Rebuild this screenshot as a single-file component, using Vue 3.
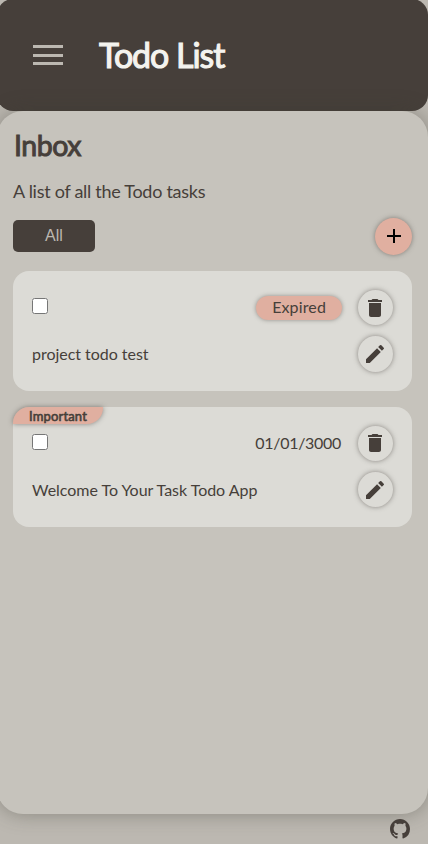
<script setup>
const tasks = [
  { id: 1, title: 'project todo test', date: 'Expired', expired: true, important: false },
  { id: 2, title: 'Welcome To Your Task Todo App', date: '01/01/3000', expired: false, important: true },
]
</script>

<template>
  <div class="page">
    <header class="header">
      <button class="menu" aria-label="Menu"><span></span><span></span><span></span></button>
      <h1>Todo List</h1>
    </header>
    <main class="main">
      <h2>Inbox</h2>
      <p class="desc">A list of all the Todo tasks</p>
      <div class="bar">
        <button class="all">All</button>
        <button class="round add" aria-label="Add">
          <svg width="24" height="24" viewBox="0 0 24 24"><path d="M19 13h-6v6h-2v-6H5v-2h6V5h2v6h6v2z" /></svg>
        </button>
      </div>
      <article v-for="t in tasks" :key="t.id" class="task" :class="{ flagged: t.important }">
        <span v-if="t.important" class="tag">Important</span>
        <div class="row">
          <input type="checkbox" class="check" />
          <span class="date" :class="{ expired: t.expired }">{{ t.date }}</span>
          <button class="round delete" aria-label="Delete">
            <svg width="24" height="24" viewBox="0 0 24 24"><path d="M6 19c0 1.1.9 2 2 2h8c1.1 0 2-.9 2-2V7H6v12zM19 4h-3.5l-1-1h-5l-1 1H5v2h14V4z" /></svg>
          </button>
        </div>
        <div class="row second">
          <span class="title">{{ t.title }}</span>
          <button class="round edit" aria-label="Edit">
            <svg width="24" height="24" viewBox="0 0 24 24"><path d="M3 17.25V21h3.75L17.81 9.94l-3.75-3.75L3 17.25zM20.71 7.04a1 1 0 0 0 0-1.41l-2.34-2.34a1 1 0 0 0-1.41 0l-1.83 1.83 3.75 3.75 1.83-1.83z" /></svg>
          </button>
        </div>
      </article>
    </main>
    <footer class="footer">
      <svg width="20" height="20" viewBox="0 0 16 16"><path d="M8 0C3.58 0 0 3.58 0 8c0 3.54 2.29 6.53 5.47 7.59.4.07.55-.17.55-.38 0-.19-.01-.82-.01-1.49-2.01.37-2.53-.49-2.69-.94-.09-.23-.48-.94-.82-1.13-.28-.15-.68-.52-.01-.53.63-.01 1.08.58 1.23.82.72 1.21 1.87.87 2.33.66.07-.52.28-.87.51-1.07-1.78-.2-3.64-.89-3.64-3.95 0-.87.31-1.59.82-2.15-.08-.2-.36-1.02.08-2.12 0 0 .67-.21 2.2.82.64-.18 1.32-.27 2-.27s1.36.09 2 .27c1.53-1.04 2.2-.82 2.2-.82.44 1.1.16 1.92.08 2.12.51.56.82 1.27.82 2.15 0 3.07-1.87 3.75-3.65 3.95.29.25.54.73.54 1.48 0 1.07-.01 1.93-.01 2.2 0 .21.15.46.55.38A8.01 8.01 0 0 0 16 8c0-4.42-3.58-8-8-8z" /></svg>
    </footer>
  </div>
</template>

<style>
body { background: #bcb8b1; overflow: hidden; }
</style>

<style scoped>
* { box-sizing: border-box; }
.page {
  display: flex;
  flex-direction: column;
  height: 844px;
  margin-left: -3px;
  font-family: Lato, sans-serif;
  color: #463f3a;
}
h1, h2, p { margin: 0; }
button { border: 0; padding: 0; }
.header {
  display: flex;
  align-items: center;
  height: 112px;
  margin-top: -1px;
  padding-left: 36px;
  border-radius: 16px;
  background: #463f3a;
}
.menu {
  display: flex;
  flex-direction: column;
  gap: 6px;
  width: 30px;
  background: none;
}
.menu span { height: 3px; background: #bcb8b1; }
.menu span:nth-child(2) { margin-bottom: -1px; }
h1 {
  margin-left: 36px;
  padding-bottom: 1px;
  font-size: 34px;
  line-height: 41px;
  font-weight: 400;
  letter-spacing: -1.05px;
  color: #f4f3ee;
  -webkit-text-stroke: 1.1px #f4f3ee;
}
.main {
  height: 703px;
  padding: 16px 16px 0;
  border-radius: 26px;
  background: #c6c3bc;
  box-shadow: 0 0 20px rgba(60, 60, 50, .4);
}
h2 {
  padding-left: 1px;
  font-size: 28.5px;
  line-height: 36px;
  font-weight: 400;
  letter-spacing: -.5px;
  -webkit-text-stroke: 1px #463f3a;
}
.desc { margin-top: 17px; font-size: 18px; line-height: 22px; letter-spacing: -.28px; }
.bar { display: flex; justify-content: space-between; align-items: center; height: 38px; margin-top: 15px; }
.all {
  width: 82px;
  height: 32px;
  border-radius: 5px;
  background: #463f3a;
  color: #bcb8b1;
  font: 16px "Liberation Sans", sans-serif;
}
.round {
  display: flex;
  align-items: center;
  justify-content: center;
  align-self: flex-start;
  flex: none;
  width: 35px;
  height: 35px;
  border-radius: 50%;
  background: #dcdbd6;
  box-shadow: 0 0 5px rgba(70, 63, 58, .55);
}
.round svg { flex: none; margin-right: 1px; fill: #463f3a; }
.delete svg { margin-top: 1px; }
.flagged .delete svg { margin: 0 1px 1px 0; }
.edit { height: 36px; }
.flagged .edit { height: 35px; }
.flagged .edit svg { margin-top: 1px; }
.add { align-self: flex-end; width: 37px; height: 37px; background: #e0afa0; }
.add svg { margin: 0 0 1px 1px; fill: #000; }
.task {
  position: relative;
  height: 120px;
  margin-top: 16px;
  padding: 19px;
  border-radius: 16px;
  background: #dcdbd6;
}
.row { display: flex; align-items: center; height: 36px; font-size: 16px; line-height: 20px; }
.second { margin-top: 10px; letter-spacing: -.03px; }
.check { width: 16px; height: 16px; margin: 0 auto 4px 0; }
.date { margin: 0 17px 2px 0; letter-spacing: -.3px; }
.expired {
  height: 24px;
  margin: 0 16px 1px 0;
  padding: 0 16px;
  border-radius: 12px;
  letter-spacing: .13px;
  line-height: 22px;
  background: #e0afa0;
  box-shadow: 0 0 4px rgba(70, 63, 58, .5);
}
.title { margin-right: auto; }
.tag {
  position: absolute;
  left: 0;
  top: 0;
  width: 90px;
  height: 17px;
  padding-left: 16px;
  border-radius: 16px 0;
  background: #e0afa0;
  box-shadow: 0 0 5px rgba(70, 63, 58, .55);
  font-size: 13px;
  line-height: 18px;
  letter-spacing: .16px;
  -webkit-text-stroke: .6px #463f3a;
}
.footer { display: flex; justify-content: flex-end; padding: 5px 18px 0 0; }
.footer svg { fill: #463f3a; }
</style>
